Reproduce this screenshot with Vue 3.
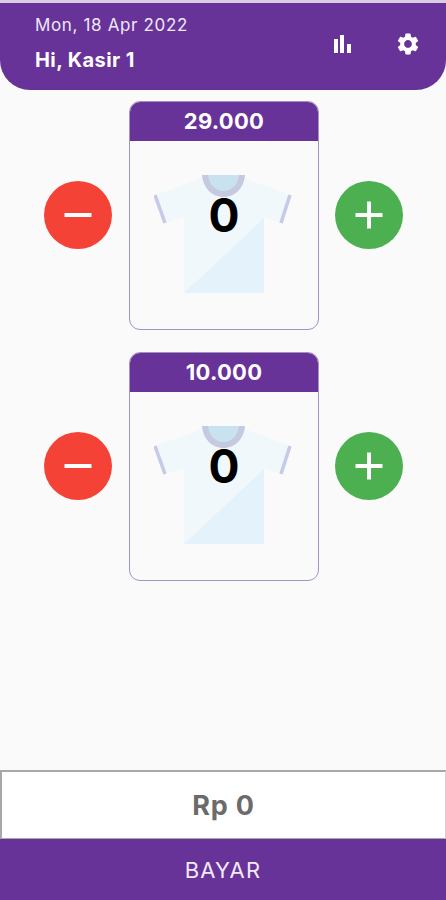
<template>
  <div class="page">
    <header class="topbar">
      <div class="greeting">
        <div class="date">Mon, 18 Apr 2022</div>
        <div class="hello">Hi, Kasir 1</div>
      </div>
      <div class="actions">
        <svg width="24" height="24" viewBox="0 0 24 24" fill="#fff">
          <rect x="3" y="7" width="4" height="14" />
          <rect x="9" y="3" width="4" height="18" />
          <rect x="16" y="12" width="4" height="9" />
        </svg>
        <svg width="26" height="26" viewBox="0 0 24 24" fill="#fff">
          <path d="M19.14 12.94c.04-.3.06-.61.06-.94 0-.32-.02-.64-.07-.94l2.03-1.58a.49.49 0 0 0 .12-.61l-1.92-3.32a.488.488 0 0 0-.59-.22l-2.39.96c-.5-.38-1.03-.7-1.62-.94l-.36-2.54a.484.484 0 0 0-.48-.41h-3.84c-.24 0-.43.17-.47.41l-.36 2.54c-.59.24-1.13.57-1.62.94l-2.39-.96c-.22-.08-.47 0-.59.22L2.74 8.87c-.12.21-.08.47.12.61l2.03 1.58c-.05.3-.09.63-.09.94s.02.64.07.94l-2.03 1.58a.49.49 0 0 0-.12.61l1.92 3.32c.12.22.37.29.59.22l2.39-.96c.5.38 1.03.7 1.62.94l.36 2.54c.05.24.24.41.48.41h3.84c.24 0 .44-.17.47-.41l.36-2.54c.59-.24 1.13-.56 1.62-.94l2.39.96c.22.08.47 0 .59-.22l1.92-3.32c.12-.22.07-.47-.12-.61l-2.01-1.58zM12 15.6c-1.98 0-3.6-1.62-3.6-3.6s1.62-3.6 3.6-3.6 3.6 1.62 3.6 3.6-1.62 3.6-3.6 3.6z" />
        </svg>
      </div>
    </header>

    <main class="products">
      <div v-for="p in products" :key="p" class="row">
        <button class="round minus">
          <svg width="28" height="28" viewBox="0 0 28 28"><rect x="0.5" y="12" width="27" height="4" fill="#fff" /></svg>
        </button>
        <div class="card">
          <div class="price">{{ p }}</div>
          <div class="card-body">
            <svg class="shirt" width="140" height="120" viewBox="0 0 140 120">
              <path d="M48 3 L1 20 L11 48 L30 42 L30 118 L110 118 L110 42 L127 48 L136 20 L91 3 Z" fill="#f1f8fc" />
              <path d="M30 118 L110 118 L110 43 Z" fill="#e4f2fc" />
              <path d="M48 0 H91 C90 13 81 22 69.5 22 C58 22 49 13 48 0 Z" fill="#c5cae0" />
              <path d="M54 0 H85 C84 9 78 16 69.5 16 C61 16 55 9 54 0 Z" fill="#c9e2f0" />
              <path d="M1 20 L11 48" stroke="#c5cae9" stroke-width="3.5" fill="none" />
              <path d="M136 20 L127 48" stroke="#c5cae9" stroke-width="3.5" fill="none" />
            </svg>
            <span class="qty">0</span>
          </div>
        </div>
        <button class="round plus">
          <svg width="28" height="28" viewBox="0 0 28 28"><path d="M0.5 14 H27.5 M14 0.5 V27.5" stroke="#fff" stroke-width="4" fill="none" /></svg>
        </button>
      </div>
    </main>

    <div class="total">Rp 0</div>
    <button class="pay">BAYAR</button>
  </div>
</template>

<script setup>
const products = ['29.000', '10.000']
</script>

<style>
html, body { background: #fafafa; }
</style>

<style scoped>
.page {
  width: 446px;
  height: 900px;
  display: flex;
  flex-direction: column;
  background: #fafafa;
  font-family: Inter, "Open Sans", sans-serif;
  overflow: hidden;
}

.topbar {
  height: 87px;
  margin-top: 3px;
  padding: 0 25px 6px 35px;
  background: #673399;
  border-radius: 0 0 30px 30px;
  color: #fff;
  display: flex;
  justify-content: space-between;
  align-items: center;
  box-sizing: border-box;
  box-shadow: 0 -3px 0 #d9cde6;
}

.date {
  font-size: 17px;
  letter-spacing: 0.65px;
  color: #efe8f5;
  line-height: 20px;
}

.hello {
  margin-top: 13px;
  font-size: 20px;
  letter-spacing: 0.4px;
  font-weight: 700;
  line-height: 24px;
}

.actions {
  display: flex;
  align-items: center;
  gap: 40px;
}

.products {
  flex: 1;
  padding-top: 11px;
  display: flex;
  flex-direction: column;
  gap: 22px;
}

.row {
  display: flex;
  align-items: center;
  gap: 16px;
  padding-left: 44px;
}

.round {
  width: 68px;
  height: 68px;
  border: 0;
  border-radius: 50%;
  padding: 0;
  margin-bottom: 1px;
  display: flex;
  align-items: center;
  justify-content: center;
}

.minus { background: #f44336; }
.plus { background: #4caf50; }

.card {
  width: 190px;
  height: 229px;
  margin-left: 1px;
  border: 1px solid #a592c4;
  border-radius: 11px;
  box-sizing: border-box;
  overflow: hidden;
  display: flex;
  flex-direction: column;
}

.price {
  height: 39px;
  background: #673399;
  color: #fff;
  font-size: 22px;
  letter-spacing: 0.3px;
  font-weight: 700;
  line-height: 39px;
  text-align: center;
}

.card-body {
  flex: 1;
  position: relative;
  display: flex;
  justify-content: center;
  padding-top: 34px;
}

.qty {
  position: absolute;
  top: 46px;
  left: 0;
  right: 0;
  text-align: center;
  font-size: 46px;
  font-weight: 700;
  line-height: 56px;
  color: #000;
}

.total {
  height: 69px;
  background: #fff;
  border: 2px solid #a8a8a8;
  border-bottom-width: 1px;
  border-right: 1px solid #d0d0d0;
  box-sizing: border-box;
  color: #6b6b6b;
  font-size: 27px;
  letter-spacing: 0.8px;
  font-weight: 700;
  display: flex;
  align-items: center;
  justify-content: center;
}

.pay {
  height: 61px;
  border: 0;
  background: #673399;
  color: #f1eaf7;
  font-family: inherit;
  font-size: 22px;
  letter-spacing: 1.2px;
}
</style>
